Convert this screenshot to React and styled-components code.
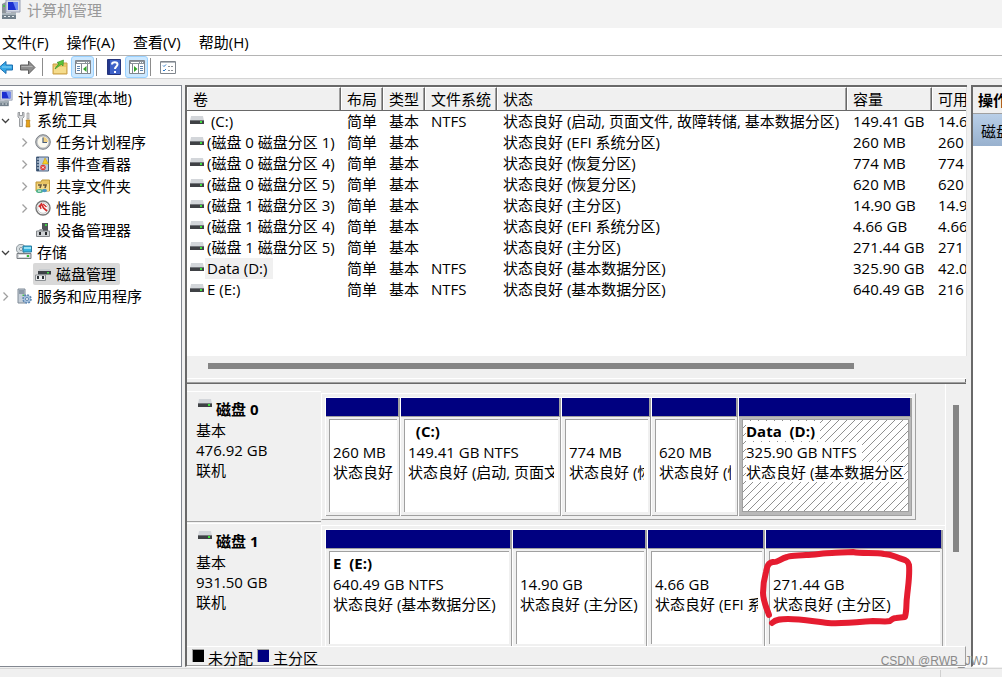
import React from "react";
import styled, { createGlobalStyle, css } from "styled-components";

const Global = createGlobalStyle`
  * { box-sizing: border-box; }
  body {
    margin: 0;
    background: #f0f0f0;
    color: #000;
    font: 15px/20px "Open Sans", "Noto Sans CJK SC", sans-serif;
  }
  button { font: inherit; color: inherit; border: 0; background: none; padding: 0; }
  svg { display: block; flex: none; }
`;

const Window = styled.div`
  display: flex;
  flex-direction: column;
  min-height: 100vh;
  overflow: hidden;
`;

const TitleBar = styled.header`
  display: flex;
  align-items: flex-start;
  gap: 6px;
  height: 28px;
  padding-left: 1px;
  background: #f3f3f3;
  color: #999;
`;

const MenuBar = styled.nav`
  display: flex;
  align-items: center;
  gap: 18px;
  height: 28px;
  padding: 0 2px;
  background: #fff;
  border-bottom: 1px solid #b4b4b4;
`;

const MenuButton = styled.button`
  white-space: nowrap;
`;

const ToolBar = styled.div`
  display: flex;
  align-items: center;
  height: 23px;
  background: #fff;
  border-bottom: 1px solid #d4d4d4;
`;

const ArrowGroup = styled.div`
  display: flex;
  gap: 3px;
  width: 40px;
`;

const ArrowButton = styled.button`
  display: flex;
  align-items: center;
`;

const ToolButton = styled.button`
  display: flex;
  align-items: center;
  justify-content: center;
  width: 23px;
  height: 22px;
  border: 1px solid ${(p) => (p.$on ? "#99d1ff" : "transparent")};
  border-radius: 3px;
  background: ${(p) => (p.$on ? "#cce8ff" : "transparent")};
`;

const ToolSeparator = styled.span`
  width: 1px;
  height: 18px;
  margin: 0 5px 0 2px;
  background: #8c8c8c;
`;

const Main = styled.main`
  display: flex;
  flex: 1;
  padding-top: 6px;
`;

const TreePanel = styled.aside`
  flex: none;
  width: 182px;
  margin-right: 3px;
  padding-top: 1px;
  background: #fff;
  border: solid #828790;
  border-width: 1px 1px 1px 0;
`;

const TreeList = styled.ul`
  list-style: none;
  margin: 0;
  padding: 0;
`;

const TreeRow = styled.li`
  display: flex;
  align-items: center;
  height: 22px;
  padding-left: ${(p) => (p.$level === 2 ? 19 : 0)}px;
`;

const Expander = styled.span`
  display: flex;
  justify-content: center;
  width: 10px;
`;

const TreeItem = styled.button`
  display: flex;
  align-items: center;
  gap: 5px;
  height: 22px;
  padding: 0 4px 0 2px;
  margin-left: ${(p) => (p.$level === 0 ? -6 : 4)}px;
  border-radius: 2px;
  white-space: nowrap;
  background: ${(p) => (p.$selected ? "#d9d9d9" : "transparent")};
`;

const Center = styled.section`
  display: flex;
  flex-direction: column;
  flex: 1;
  min-width: 0;
  border: solid #696969;
  border-width: 2px 0 0 2px;
  border-bottom: 1px solid #fff;
`;

const VolumeArea = styled.div`
  flex: 1;
  min-height: 269px;
  overflow: hidden;
  background: #fff;
  border-right: 1px solid #e3e3e3;
`;

const VolumeTable = styled.table`
  width: 100%;
  table-layout: fixed;
  border-collapse: separate;
  border-spacing: 0;
`;

const HeadCell = styled.th`
  height: 24px;
  padding: 0 0 0 6px;
  text-align: left;
  font-weight: 400;
  white-space: nowrap;
  overflow: hidden;
  background: #f0f0f0;
  border-top: 1px solid #fff;
  border-bottom: 1px solid #696969;
  border-right: 1px solid #696969;
  box-shadow: inset 1px 0 #fff, inset -1px 0 #a0a0a0;
  &:last-child {
    border-right: 0;
    box-shadow: inset 1px 0 #fff;
  }
`;

const Cell = styled.td`
  height: 21px;
  padding: 0 0 1px 6px;
  line-height: 19px;
  white-space: nowrap;
  overflow: hidden;
`;

const VolumeCell = styled(Cell)`
  padding: 0 0 0 3px;
`;

const VolumeName = styled.span`
  display: flex;
  align-items: center;
  gap: 1px;
  white-space: pre;
`;

const VolumeLabel = styled.span`
  line-height: 21px;
  padding: 0 6px 0 2px;
  background: ${(p) => (p.$marked ? "#f0f0f0" : "transparent")};
`;

const HScroll = styled.div`
  height: 22px;
  padding: 7px 113px 0 21px;
`;

const HThumb = styled.div`
  height: 6px;
  background: #858585;
`;

const Splitter = styled.div`
  height: 6px;
  margin-right: 1px;
  border-top: 1px solid #fff;
  border-bottom: 1px solid #696969;
  box-shadow: inset 0 -1px #a0a0a0, inset -1px 0 #696969;
`;

const DiskArea = styled.div`
  display: flex;
`;

const DiskColumn = styled.div`
  flex: 1;
  min-width: 0;
  padding-top: 7px;
`;

const VScroll = styled.div`
  width: 22px;
  padding: 21px 0 0 7px;
  border-left: 1px solid #fff;
`;

const VThumb = styled.div`
  width: 6px;
  height: 147px;
  background: #858585;
`;

const DiskRow = styled.article`
  display: flex;
  height: ${(p) => (p.$last ? 123 : 132)}px;
  overflow: hidden;
`;

const DiskInfo = styled.div`
  flex: none;
  width: 134px;
  margin-bottom: ${(p) => (p.$last ? 0 : 1)}px;
  padding: 7px 0 0 9px;
  border-top: 1px solid #fff;
  border-bottom: ${(p) => (p.$last ? "0" : "1px solid #a0a0a0")};
`;

const DiskTitle = styled.h2`
  display: flex;
  align-items: flex-start;
  gap: 4px;
  margin: 0;
  padding-left: 2px;
  font-size: 15px;
  line-height: 21px;
  font-weight: 700;
`;

const Line = styled.div`
  white-space: nowrap;
`;

const Graph = styled.div`
  flex: 1;
  min-width: 0;
  padding: 2px ${(p) => (p.$last ? 0 : 29)}px 0 0;
`;

const GraphFrame = styled.div`
  height: 127px;
  padding: 3px ${(p) => (p.$last ? 2 : 3)}px 3px 3px;
  border: 1px solid #fff;
  border-bottom-color: #a0a0a0;
  border-right: ${(p) => (p.$last ? "0" : "1px solid #a0a0a0")};
  display: grid;
  grid-template-columns: ${(p) => p.$sizes.map((s) => `minmax(0, ${s}fr)`).join(" ")};
`;

const Partition = styled.div`
  position: relative;
  display: flex;
  flex-direction: column;
  height: 119px;
  border-top: 1px solid #fff;
  border-left: 1px solid #fff;
`;

const Band = styled.div`
  height: 19px;
  background: #000080;
  border-right: 2px solid #a0a0a0;
  border-bottom: 1px solid #a0a0a0;
`;

const PartitionBody = styled.div`
  flex: 1;
  padding: 2px 2px 3px 3px;
  border-right: 1px solid #a0a0a0;
  border-bottom: 1px solid #a0a0a0;
  background: ${(p) => (p.$selected ? "#b9b9b9" : "#f0f0f0")};
`;

const PartitionBox = styled.div`
  height: 93px;
  padding: 1px 4px 0 3px;
  background-color: #fff;
  border: solid #a0a0a0;
  border-width: 1px 0 0 1px;
  ${(p) =>
    p.$selected &&
    css`
      border-width: 1px;
      background-image: linear-gradient(135deg, transparent 46%, #909090 46%, #909090 54%, transparent 54%);
      background-size: 8px 8px;
    `}
`;

const PartitionLine = styled.div`
  height: ${(p) => (p.$title ? 21 : 20)}px;
  font-weight: ${(p) => (p.$title ? 700 : 400)};
  white-space: pre;
  overflow: hidden;
`;

const Paper = styled.span`
  display: inline-block;
  padding-right: 5px;
  background: #fff;
`;

const Scribble = styled.svg`
  position: absolute;
  left: -7px;
  top: 18px;
  z-index: 1;
`;

const Legend = styled.footer`
  display: flex;
  align-items: center;
  gap: 4px;
  height: 20px;
  margin-right: 1px;
  padding: 3px 5px 0;
  border: 1px solid #a0a0a0;
  border-top-color: #fff;
  border-left: 0;
  white-space: nowrap;
`;

const Swatch = styled.span`
  width: 12px;
  height: 13px;
  margin-bottom: 4px;
  background: ${(p) => p.$color};
  border: solid #a0a0a0;
  border-width: 1px 0 0 1px;
`;

const ActionPanel = styled.aside`
  flex: none;
  width: 31px;
  margin-left: 4px;
  overflow: hidden;
  background: #fff;
  border: solid #696969;
  border-width: 2px 0 0 2px;
  border-bottom: 1px solid #fff;
  white-space: nowrap;
`;

const ActionTitle = styled.h2`
  margin: 0;
  height: 27px;
  padding: 3px 0 0 5px;
  font-size: 15px;
  line-height: 20px;
  background: #f0f0f0;
  border-bottom: 1px solid #a0a0a0;
`;

const ActionGroup = styled.button`
  display: block;
  width: 100%;
  height: 32px;
  padding: 2px 0 0 8px;
  text-align: left;
  background: linear-gradient(#b9cfe8, #98b1ce);
`;

const StatusBar = styled.footer`
  display: flex;
  justify-content: flex-end;
  height: 9px;
  margin-top: 1px;
  padding: 1px 61px 0 0;
  border-top: 1px solid #d7d7d7;
`;

const StatusMark = styled.span`
  width: 1px;
  background: #d0d0d0;
`;

const Watermark = styled.div`
  position: absolute;
  right: 14px;
  bottom: 6px;
  z-index: 2;
  color: #8a8a8a;
  font: 12px/20px "Liberation Sans", sans-serif;
`;

const Shell = styled.div`
  position: relative;
`;

/* ---- icons ---- */

const ComputerIcon = ({ width = 20 }) => (
  <svg width={width} height={width} viewBox="0 0 20 20">
    <path d="M1 4l4-2v11H1z" fill="#8d9499" />
    <path d="M2 5h2v2H2z" fill="#4fc24f" />
    <path d="M5 0h14v12H5z" fill="#d5d9e4" stroke="#9aa1b5" />
    <path d="M7 2h10v8H7z" fill="#1c2fd0" />
    <path d="M12 2h5v8h-2z" fill="#6f8bf2" />
    <path d="M10 12h5v3h-5z" fill="#a8adb5" />
    <path d="M1 13h14v6H1z" fill="#73818c" />
    <path d="M1 13h14v2H1z" fill="#aab4bb" />
    <path d="M3 16h2v1H3zM7 16h2v1H7zM11 16h2v1h-2z" fill="#e8edf0" />
  </svg>
);

const DriveIcon = () => (
  <svg width="14" height="12" viewBox="0 0 14 12">
    <path d="M1 0h12l1 5H0z" fill="#d3d6da" />
    <path d="M0 4h14v4H0z" fill="#3f4145" />
    <path d="M0 4h14v1H0z" fill="#74777c" />
    <path d="M10 5h2v2h-2z" fill="#3fe03f" />
  </svg>
);

const ArrowIcon = ({ back }) =>
  back ? (
    <svg width="16" height="16" viewBox="0 0 16 16">
      <path d="M-1 8.500L6 2.500v3.500h6.500v5H6v3.500z" fill="#35a7e6" stroke="#1c6fb0" />
      <path d="M2 8h9.500" stroke="#8fd6f8" />
    </svg>
  ) : (
    <svg width="17" height="16" viewBox="0 0 17 16">
      <path d="M16 8.500L9.500 2v4H1.500v5h8v4z" fill="#8e8e8e" stroke="#606060" />
      <path d="M2.500 7.500h11" stroke="#b4b4b4" />
    </svg>
  );

const FolderUpIcon = () => (
  <svg width="16" height="16" viewBox="0 0 16 16">
    <path d="M1 5h5l1-1h8v11H1z" fill="#e9c668" stroke="#c9a04a" />
    <path d="M2 8h12v6H2z" fill="#f5dc8c" />
    <path d="M3 10c1-3 3-4 4-5L5 3.500 11.500 1 11 7 9.500 5.500C7 6.500 6 8 3 10z" fill="#5cc53a" stroke="#2c8a22" strokeWidth=".6" />
  </svg>
);

const PaneIcon = ({ right }) => (
  <svg width="16" height="14" viewBox="0 0 16 14">
    <path d="M.5.5h15v13H.5z" fill="#fff" stroke="#80868d" />
    <path d="M1 1h14v3H1z" fill="#8d949b" />
    <path d="M2 2h8v1H2zM11 2h1v1h-1zM13 2h1v1h-1z" fill="#fff" />
    {right ? (
      <>
        <path d="M3.500 4v9M9.500 4v9" stroke="#80868d" />
        <path d="M11 6.500h3M11 8.500h3M11 10.500h3" stroke="#5d84b0" />
        <path d="M5 6l3.500 3L5 12z" fill="#35a52c" />
      </>
    ) : (
      <>
        <path d="M6.500 4v9M12.500 4v9" stroke="#80868d" />
        <path d="M2 6.500h3M2 8.500h3M2 10.500h3" stroke="#5d84b0" />
        <path d="M11.500 6L8 9l3.500 3z" fill="#35a52c" />
      </>
    )}
  </svg>
);

const HelpIcon = () => (
  <svg width="14" height="16" viewBox="0 0 14 16">
    <path d="M.5.500h13v15H.5z" fill="#3f62c8" stroke="#24347c" />
    <path d="M1 1h2v14H1z" fill="#23388e" />
    <path d="M5 5.500C5 2.500 10.500 2.500 10.500 5.500c0 2-2.500 2-2.500 4.500" fill="none" stroke="#fff" strokeWidth="2" />
    <path d="M7 12h2v2H7z" fill="#fff" />
  </svg>
);

const ChecklistIcon = () => (
  <svg width="16" height="13" viewBox="0 0 16 13">
    <path d="M.5.500h15v12H.5z" fill="#fff" stroke="#80868d" />
    <path d="M1 1h14v1H1z" fill="#b5bac0" />
    <path d="M3 4.500l1 1 2-2M3 9l1 1 2-2" fill="none" stroke="#2a78c8" />
    <path d="M8 5.500h2M11 5.500h2M8 9.500h2M11 9.500h2" stroke="#8b9096" />
  </svg>
);

const ChevronIcon = ({ open }) => (
  <svg width="9" height="9" viewBox="0 0 9 9">
    {open ? (
      <path d="M1 3l3.500 3.500L8 3" fill="none" stroke="#404040" strokeWidth="1.300" />
    ) : (
      <path d="M2.500 0.500l4 4-4 4" fill="none" stroke="#a0a0a0" strokeWidth="1.300" />
    )}
  </svg>
);

const TREE_ICONS = {
  tools: (
    <>
      <path d="M2 .5v4.500l1.500 1.500V14.500h3V6.500L8 5V.5L6.500 0v3.500h-3V0z" fill="#d6d8da" stroke="#85898d" strokeWidth=".8" />
      <path d="M11 1h2v6h-2z" fill="#dedede" stroke="#8a8a8a" strokeWidth=".6" />
      <path d="M10 8h4l-.5 2 .5 5h-4l.5-5z" fill="#e5a21c" stroke="#a87008" strokeWidth=".6" />
    </>
  ),
  clock: (
    <>
      <circle cx="8" cy="8" r="7.300" fill="#b9bcc0" stroke="#7c8085" />
      <circle cx="8" cy="8" r="5.500" fill="#fbf9ef" />
      <path d="M8 8h5A5 5 0 0 0 8 3z" fill="#f1d184" />
      <path d="M8 3.500V8.500h4" fill="none" stroke="#4b5f7a" strokeWidth="1.200" />
    </>
  ),
  events: (
    <>
      <path d="M1.500 1h12v14h-12z" fill="#b8c9df" stroke="#4e6482" />
      <path d="M2 1h2v14H2z" fill="#37516f" />
      <path d="M2 3h2M2 6h2M2 9h2M2 12h2" stroke="#e4ecf4" />
      <path d="M10 2l3.500 6h-6z" fill="#f7cf27" stroke="#bb9100" strokeWidth=".5" />
      <circle cx="8" cy="11.500" r="2.700" fill="#de3b36" />
      <path d="M7 10.500l2 2M9 10.500l-2 2" stroke="#fff" />
    </>
  ),
  share: (
    <>
      <path d="M1 4h5l1-2h7.500v11H1z" fill="#e9c462" stroke="#c09838" />
      <path d="M2 6h12v7H2z" fill="#f6dc8b" />
      <path d="M3 7h3l-1 3M8 7h3l-1 3" fill="none" stroke="#6a5638" strokeWidth="1.600" />
      <ellipse cx="4.500" cy="13" rx="3.500" ry="2" fill="#53b58e" />
      <ellipse cx="9.500" cy="12.500" rx="2.500" ry="1.700" fill="#4a9ac4" />
      <path d="M3 13h3" stroke="#fff" />
    </>
  ),
  perf: (
    <>
      <circle cx="8" cy="8" r="7" fill="#fff" stroke="#777" strokeWidth="1.400" />
      <circle cx="8" cy="8" r="5.300" fill="#fff" stroke="#c9c9c9" />
      <path d="M4 7l2.500-3 2 4 3.500 3" fill="none" stroke="#d22a2a" strokeWidth="1.700" />
      <path d="M5 5l1 4M8 4l3.500 3" stroke="#d22a2a" strokeWidth="1.300" />
    </>
  ),
  device: (
    <>
      <path d="M7 1h6v8H7z" fill="#505458" />
      <path d="M10 2h2v2h-2z" fill="#42cc47" />
      <path d="M1.500 9h13v5.500h-13z" fill="#cfd2d5" stroke="#83878b" />
      <path d="M3 9l2-2h3v2z" fill="#9da2a6" />
      <path d="M4 10h2v3H4zM10 10h2v3h-2z" fill="#24272a" />
    </>
  ),
  storage: (
    <>
      <circle cx="5" cy="5" r="4.700" fill="#d6dde0" stroke="#90989e" />
      <circle cx="5" cy="5" r="1.500" fill="#fff" stroke="#8b9499" />
      <path d="M7 2h8.500v6H7z" fill="#37b4e0" stroke="#2a7da1" />
      <path d="M8 3h7v2H8z" fill="#95e1f5" />
      <path d="M1 9.500h14v5H1z" fill="#d5d8db" stroke="#787d82" />
      <path d="M3 11h7v2H3z" fill="#fff" />
      <path d="M11 11h2v2h-2z" fill="#37bc35" />
    </>
  ),
  disk: (
    <>
      <path d="M4 3h11l1 3H3z" fill="#c9cdd0" />
      <path d="M3 5h13v3.500H3z" fill="#3d4146" />
      <path d="M12 6h2v1.500h-2z" fill="#43df49" />
      <path d="M.5 9h10v5.500H.5z" fill="#eceeef" stroke="#8b8f93" />
      <path d="M2 10h2v3H2zM7 10h2v3H7z" fill="#303438" />
    </>
  ),
  services: (
    <>
      <path d="M2 1h7v14H2z" fill="#c6cfd8" stroke="#7f8a96" />
      <path d="M3 3h5M3 5h5" stroke="#566778" />
      <path d="M6.500 6.500h1.500v1.500H6.500z" fill="#4ac14d" />
      <circle cx="11" cy="11" r="4" fill="#a9c3df" stroke="#5c85b0" strokeWidth="1.600" strokeDasharray="1.800 1.300" />
      <circle cx="11" cy="11" r="1.500" fill="#fff" stroke="#5c85b0" />
    </>
  ),
};

const TreeIcon = ({ name }) => (
  <svg width="16" height="16" viewBox="0 0 16 16">
    {TREE_ICONS[name]}
  </svg>
);

/* ---- data ---- */

const MENUS = ["文件(F)", "操作(A)", "查看(V)", "帮助(H)"];

const TREE = [
  { level: 1, icon: "tools", text: "系统工具", open: true },
  { level: 2, icon: "clock", text: "任务计划程序", open: false },
  { level: 2, icon: "events", text: "事件查看器", open: false },
  { level: 2, icon: "share", text: "共享文件夹", open: false },
  { level: 2, icon: "perf", text: "性能", open: false },
  { level: 2, icon: "device", text: "设备管理器" },
  { level: 1, icon: "storage", text: "存储", open: true },
  { level: 2, icon: "disk", text: "磁盘管理", selected: true },
  { level: 1, icon: "services", text: "服务和应用程序", open: false },
];

const COLUMNS = [
  ["卷", 154],
  ["布局", 42],
  ["类型", 42],
  ["文件系统", 72],
  ["状态", null],
  ["容量", 85],
  ["可用", 34],
];

const VOLUMES = [
  [" (C:)", "NTFS", "状态良好 (启动, 页面文件, 故障转储, 基本数据分区)", "149.41 GB", "14.6"],
  ["(磁盘 0 磁盘分区 1)", "", "状态良好 (EFI 系统分区)", "260 MB", "260"],
  ["(磁盘 0 磁盘分区 4)", "", "状态良好 (恢复分区)", "774 MB", "774"],
  ["(磁盘 0 磁盘分区 5)", "", "状态良好 (恢复分区)", "620 MB", "620"],
  ["(磁盘 1 磁盘分区 3)", "", "状态良好 (主分区)", "14.90 GB", "14.9"],
  ["(磁盘 1 磁盘分区 4)", "", "状态良好 (EFI 系统分区)", "4.66 GB", "4.66"],
  ["(磁盘 1 磁盘分区 5)", "", "状态良好 (主分区)", "271.44 GB", "271"],
  ["Data (D:)", "NTFS", "状态良好 (基本数据分区)", "325.90 GB", "42.0"],
  ["E (E:)", "NTFS", "状态良好 (基本数据分区)", "640.49 GB", "216"],
];

const DISKS = [
  {
    name: "磁盘 0",
    size: "476.92 GB",
    parts: [
      { w: 75, title: "", size: "260 MB", state: "状态良好" },
      { w: 161, title: "  (C:)", size: "149.41 GB NTFS", state: "状态良好 (启动, 页面文" },
      { w: 90, title: "", size: "774 MB", state: "状态良好 (恢" },
      { w: 87, title: "", size: "620 MB", state: "状态良好 (恢" },
      { w: 174, title: "Data  (D:)", size: "325.90 GB NTFS", state: "状态良好 (基本数据分区", selected: true },
    ],
  },
  {
    name: "磁盘 1",
    size: "931.50 GB",
    last: true,
    parts: [
      { w: 187, title: "E  (E:)", size: "640.49 GB NTFS", state: "状态良好 (基本数据分区)" },
      { w: 135, title: "", size: "14.90 GB", state: "状态良好 (主分区)" },
      { w: 118, title: "", size: "4.66 GB", state: "状态良好 (EFI 系" },
      { w: 178, title: "", size: "271.44 GB", state: "状态良好 (主分区)", circled: true },
    ],
  },
];

function PartitionView({ part }) {
  const wrap = (text) => (part.selected ? <Paper>{text}</Paper> : text);
  return (
    <Partition>
      <Band />
      <PartitionBody $selected={part.selected}>
        <PartitionBox $selected={part.selected}>
          <PartitionLine $title>{part.title && wrap(part.title)}</PartitionLine>
          <PartitionLine>{wrap(part.size)}</PartitionLine>
          <PartitionLine>{wrap(part.state)}</PartitionLine>
        </PartitionBox>
      </PartitionBody>
      {part.circled && (
        <Scribble width="154" height="80" viewBox="759 548 154 80">
          <path
            d="M772 623C776 619 782 619 788 619C802 619 816 622 828 623C842 624 860 622 873 621C880 621 886 622 890 621C892 619 893 618 896 618L905 617C907 610 906 603 907 597C908 586 910 576 909 565C908 561 906 560 902 559C895 557 892 554 884 554C875 552 862 554 853 552C845 552 838 553 832 553C823 553 815 555 806 555C799 556 793 555 787 557C780 559 777 563 773 562C767 563 767 568 766 572C764 579 763 585 763 593C763 601 767 609 769 615"
            fill="none"
            stroke="#e51c30"
            strokeWidth="6"
            strokeLinecap="round"
            strokeLinejoin="round"
          />
        </Scribble>
      )}
    </Partition>
  );
}

export default function App() {
  return (
    <Shell>
      <Global />
      <Window>
        <TitleBar>
          <ComputerIcon />
          <span>计算机管理</span>
        </TitleBar>
        <MenuBar>
          {MENUS.map((m) => (
            <MenuButton key={m}>{m}</MenuButton>
          ))}
        </MenuBar>
        <ToolBar>
          <ArrowGroup>
            <ArrowButton aria-label="后退"><ArrowIcon back /></ArrowButton>
            <ArrowButton aria-label="前进"><ArrowIcon /></ArrowButton>
          </ArrowGroup>
          <ToolSeparator />
          <ToolButton aria-label="向上"><FolderUpIcon /></ToolButton>
          <ToolButton $on aria-label="显示控制台树"><PaneIcon /></ToolButton>
          <ToolSeparator />
          <ToolButton aria-label="帮助"><HelpIcon /></ToolButton>
          <ToolButton $on aria-label="显示操作窗格"><PaneIcon right /></ToolButton>
          <ToolSeparator />
          <ToolButton aria-label="属性"><ChecklistIcon /></ToolButton>
        </ToolBar>
        <Main>
          <TreePanel>
            <TreeList>
              <TreeRow $level={0}>
                <TreeItem $level={0}>
                  <ComputerIcon width={17} />
                  计算机管理(本地)
                </TreeItem>
              </TreeRow>
              {TREE.map((t) => (
                <TreeRow key={t.text} $level={t.level}>
                  <Expander>
                    {t.open !== undefined && <ChevronIcon open={t.open} />}
                  </Expander>
                  <TreeItem $level={t.level} $selected={t.selected}>
                    <TreeIcon name={t.icon} />
                    {t.text}
                  </TreeItem>
                </TreeRow>
              ))}
            </TreeList>
          </TreePanel>

          <Center>
            <VolumeArea>
              <VolumeTable>
                <colgroup>
                  {COLUMNS.map(([name, w]) => (
                    <col key={name} width={w || undefined} />
                  ))}
                </colgroup>
                <thead>
                  <tr>
                    {COLUMNS.map(([name]) => (
                      <HeadCell key={name} scope="col">{name}</HeadCell>
                    ))}
                  </tr>
                </thead>
                <tbody>
                  {VOLUMES.map(([name, fs, state, size, free]) => (
                    <tr key={name}>
                      <VolumeCell>
                        <VolumeName>
                          <DriveIcon />
                          <VolumeLabel $marked={name === "Data (D:)"}>{name}</VolumeLabel>
                        </VolumeName>
                      </VolumeCell>
                      <Cell>简单</Cell>
                      <Cell>基本</Cell>
                      <Cell>{fs}</Cell>
                      <Cell>{state}</Cell>
                      <Cell>{size}</Cell>
                      <Cell>{free}</Cell>
                    </tr>
                  ))}
                </tbody>
              </VolumeTable>
            </VolumeArea>
            <HScroll><HThumb /></HScroll>
            <Splitter />
            <DiskArea>
              <DiskColumn>
                {DISKS.map((d) => (
                  <DiskRow key={d.name} $last={d.last}>
                    <DiskInfo $last={d.last}>
                      <DiskTitle>
                        <DriveIcon />
                        {d.name}
                      </DiskTitle>
                      <Line>基本</Line>
                      <Line>{d.size}</Line>
                      <Line>联机</Line>
                    </DiskInfo>
                    <Graph $last={d.last}>
                      <GraphFrame $last={d.last} $sizes={d.parts.map((p) => p.w)}>
                        {d.parts.map((p) => (
                          <PartitionView key={p.size} part={p} />
                        ))}
                      </GraphFrame>
                    </Graph>
                  </DiskRow>
                ))}
              </DiskColumn>
              <VScroll><VThumb /></VScroll>
            </DiskArea>
            <Legend>
              <Swatch $color="#000" />
              <span>未分配</span>
              <Swatch $color="#000080" />
              <span>主分区</span>
            </Legend>
          </Center>

          <ActionPanel>
            <ActionTitle>操作</ActionTitle>
            <ActionGroup>磁盘管理</ActionGroup>
          </ActionPanel>
        </Main>
        <StatusBar><StatusMark /></StatusBar>
      </Window>
      <Watermark>CSDN @RWB_JWJ</Watermark>
    </Shell>
  );
}
